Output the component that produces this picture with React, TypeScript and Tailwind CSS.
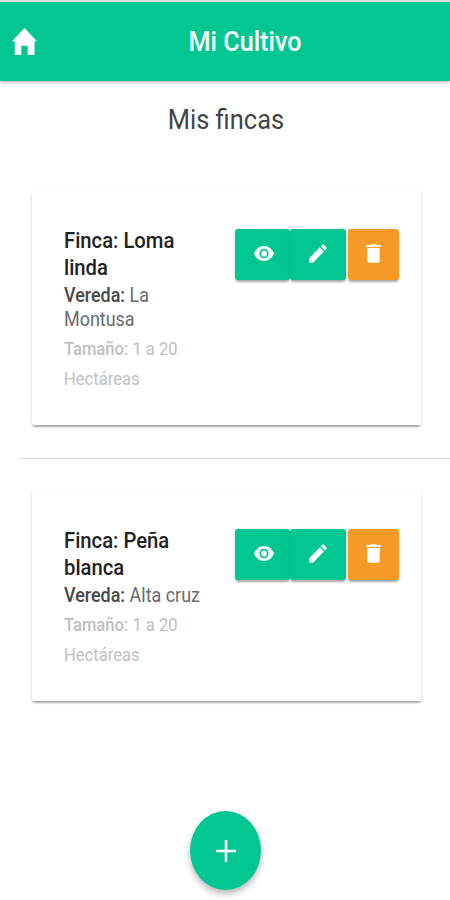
type Finca = {
  id: number;
  nombre: string;
  vereda: string;
  hectareas: string;
};

const fincas: Finca[] = [
  { id: 1, nombre: "Loma linda", vereda: "La Montusa", hectareas: "1 a 20" },
  { id: 2, nombre: "Peña blanca", vereda: "Alta cruz", hectareas: "1 a 20" },
];

const buttonShadow =
  "shadow-[0_3px_2px_-1px_rgba(0,0,0,0.28),0_1px_4px_rgba(0,0,0,0.14)]";

function HomeIcon() {
  return (
    <svg className="ml-3 h-[27px] w-[25px]" viewBox="0 0 25 27" fill="currentColor">
      <path d="M12.5 0 25 13.3h-2.5V27H15.7v-9.3H9.3V27H2.7V13.3H0z" />
    </svg>
  );
}

function EyeIcon() {
  return (
    <svg className="h-[15px] w-[20px]" viewBox="0 0 20 15" fill="currentColor">
      <path
        fillRule="evenodd"
        d="M10 0C5.4 0 1.6 3.1 0 7.5 1.6 11.9 5.4 15 10 15s8.4-3.1 10-7.5C18.4 3.1 14.6 0 10 0zm0 12.3a4.6 4.8 0 1 1 0-9.6 4.6 4.8 0 0 1 0 9.6z"
      />
      <ellipse cx="10" cy="7.5" rx="2.9" ry="3.1" />
    </svg>
  );
}

function PencilIcon() {
  return (
    <svg className="h-[19px] w-[18px]" viewBox="0 0 18 19" fill="currentColor">
      <path d="M0 14.6 10.8 3.3l4 4.3L4 18.8H0z" />
      <path d="m11.8 2.3 1.4-1.5q.9-.8 1.8 0l2.3 2.4q.7.8 0 1.7l-1.5 1.6z" />
    </svg>
  );
}

function TrashIcon() {
  return (
    <svg className="h-[19px] w-[15px]" viewBox="0 0 15 19" fill="currentColor">
      <path d="M0 1.2h3.8L5 0h5l1.2 1.2H15v1.9H0z" />
      <path d="M1.3 3.9h12.4v12.8q0 2-2 2H3.3q-2 0-2-2z" />
    </svg>
  );
}

function FincaCard({ finca }: { finca: Finca }) {
  return (
    <article className="mr-[29px] ml-8 flex justify-between rounded-xs bg-white pt-[38px] pr-[22px] pb-[31px] pl-8 shadow-[0_2px_2px_0_rgba(0,0,0,0.2),0_3px_2px_-2px_rgba(0,0,0,0.22),0_1px_4px_0_rgba(0,0,0,0.08)]">
      <div className="w-[146px]">
        <div className="-mt-px w-[159px] origin-left scale-x-92">
          <h2 className="text-[22px] leading-[26.5px] font-medium text-[#222]">
            {`Finca: ${finca.nombre}`}
          </h2>
          <h3 className="mt-[3px] text-[19.5px] leading-6 text-[#6a6a6a]">
            <b className="font-medium text-[#484848]">Vereda:</b> {finca.vereda}
          </h3>
          <p className="mt-[2px] text-[18px] leading-[30px] text-[#c0c0c0]">
            <b className="font-medium">Tamaño:</b> {finca.hectareas} Hectáreas
          </p>
        </div>
      </div>

      <div className="flex h-[51px] text-white">
        <button
          className={`flex w-[55px] items-center justify-center rounded-[3px] bg-[#00c792] pb-[2px] pl-[3px] ${buttonShadow}`}
          aria-label="Ver"
        >
          <EyeIcon />
        </button>
        <button
          className={`flex w-[56px] items-center justify-center rounded-[3px] bg-[#00c792] pb-[2px] ${buttonShadow}`}
          aria-label="Editar"
        >
          <PencilIcon />
        </button>
        <button
          className={`ml-[2px] flex w-[51px] items-center justify-center rounded-[3px] bg-[#f59b25] pb-[2px] ${buttonShadow}`}
          aria-label="Eliminar"
        >
          <TrashIcon />
        </button>
      </div>
    </article>
  );
}

export default function App() {
  return (
    <main className="flex h-[900px] w-[450px] flex-col overflow-hidden border-t-2 border-[#dfdfdf] bg-white font-['Roboto',sans-serif]">
      <header className="grid h-[79px] shrink-0 grid-cols-[48px_1fr_8px] items-center bg-[#00c792] text-white shadow-[0_1px_4px_rgba(60,20,40,0.4)]">
        <HomeIcon />
        <h1 className="scale-x-90 pt-px text-center text-[28px] leading-8 font-medium">
          Mi Cultivo
        </h1>
      </header>

      <h2 className="mt-[23px] scale-x-91 pl-[2px] text-center text-[28px] leading-8 text-[#444]">
        Mis fincas
      </h2>

      <section className="mt-[55px]">
        <FincaCard finca={fincas[0]} />
        <hr className="mt-[33px] mb-8 ml-[19px] border-[#dedede]" />
        <FincaCard finca={fincas[1]} />
      </section>

      <button
        className="mt-[110px] ml-[190px] flex h-[79px] w-[71px] shrink-0 items-center justify-center rounded-[50%] bg-[#00c792] pl-px text-white shadow-[0_4px_6px_rgba(0,0,0,0.28)]"
        aria-label="Agregar finca"
      >
        <svg className="h-[22px] w-[20px]" viewBox="0 0 20 22" stroke="currentColor" strokeWidth="2.6">
          <path d="M10 0v22M0 11h20" />
        </svg>
      </button>
    </main>
  );
}
